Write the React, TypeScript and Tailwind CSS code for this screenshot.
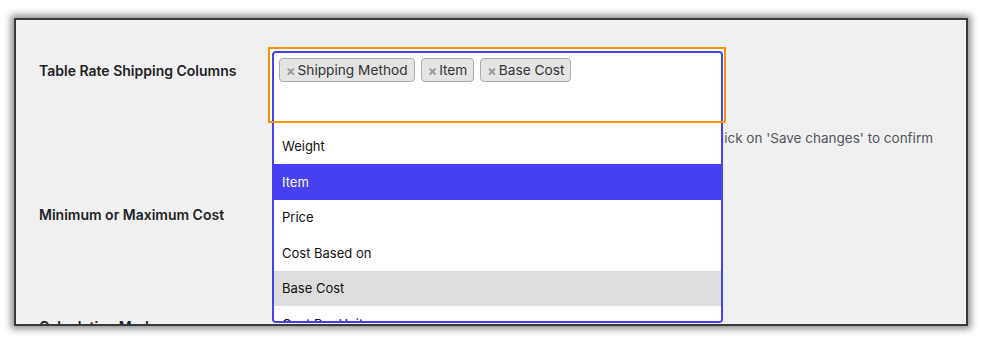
import React from "react";

const font = { fontFamily: "Inter, 'Liberation Sans', sans-serif" };

function Tag({ label }: { label: string }) {
  return (
    <div className="flex h-[24px] items-center rounded-[4px] border border-[#aaaaaa] bg-[#e4e4e4] pl-[6px] pr-[6px] pt-[2px] text-[13.7px] leading-none text-[#333]">
      <span className="mr-[2px] text-[14px] font-bold text-[#999]">×</span>
      <span>{label}</span>
    </div>
  );
}

const options = [
  { label: "Weight", state: "" },
  { label: "Item", state: "active" },
  { label: "Price", state: "" },
  { label: "Cost Based on", state: "" },
  { label: "Base Cost", state: "selected" },
  { label: "Cost Per Unit", state: "" },
];

export default function App() {
  return (
    <div className="h-[341px] w-[982px] bg-white pl-[14px] pt-[18px]" style={font}>
      <div className="relative h-[307.5px] w-[954px] overflow-hidden border-2 border-[#3a3a3a] bg-[#f0f0f0] shadow-[0_0_7px_3px_rgba(0,0,0,0.45)]">
        <div className="flex flex-col pt-[27px] text-[14px] leading-[20px] text-[#1d2327]">
          {/* Row 1 */}
          <div className="flex items-start">
            <div className="w-[252px] shrink-0 pl-[23px] pt-[14px] font-semibold">
              Table Rate Shipping Columns
            </div>
            <div className="flex flex-col">
              <div className="relative h-[76px] w-[458px] bg-white">
                <div className="absolute left-[4px] top-[4px] z-10 flex h-[272px] w-[451px] flex-col overflow-hidden rounded-[4px] border-2 border-[#4640f0] bg-white">
                  <div className="flex h-[75.5px] shrink-0 items-start gap-[6px] pl-[5px] pt-[5px]">
                    <Tag label="Shipping Method" />
                    <Tag label="Item" />
                    <Tag label="Base Cost" />
                  </div>
                  <div className="flex flex-col">
                    {options.map((o) => (
                      <div
                        key={o.label}
                        className={
                          "flex h-[35.5px] shrink-0 items-center pl-[8px] text-[13px] " +
                          (o.state === "active"
                            ? "bg-[#4640f0] text-white"
                            : o.state === "selected"
                            ? "bg-[#dddddd] text-[#111]"
                            : "bg-white text-[#111]")
                        }
                      >
                        {o.label}
                      </div>
                    ))}
                  </div>
                </div>
                <div className="pointer-events-none absolute inset-0 z-20 border-2 border-[#ff9000]" />
              </div>
              <div className="mt-[5px] w-[665px] overflow-hidden whitespace-nowrap text-right text-[13.5px] text-[#50575e]">
                Select the columns to display in the table, then click on 'Save changes' to confirm
              </div>
            </div>
          </div>
          {/* Row 2 */}
          <div className="mt-[57px] pl-[23px] font-semibold">Minimum or Maximum Cost</div>
          {/* Row 3 */}
          <div className="mt-[92px] pl-[23px] font-semibold">Calculation Mode</div>
        </div>
      </div>
    </div>
  );
}
